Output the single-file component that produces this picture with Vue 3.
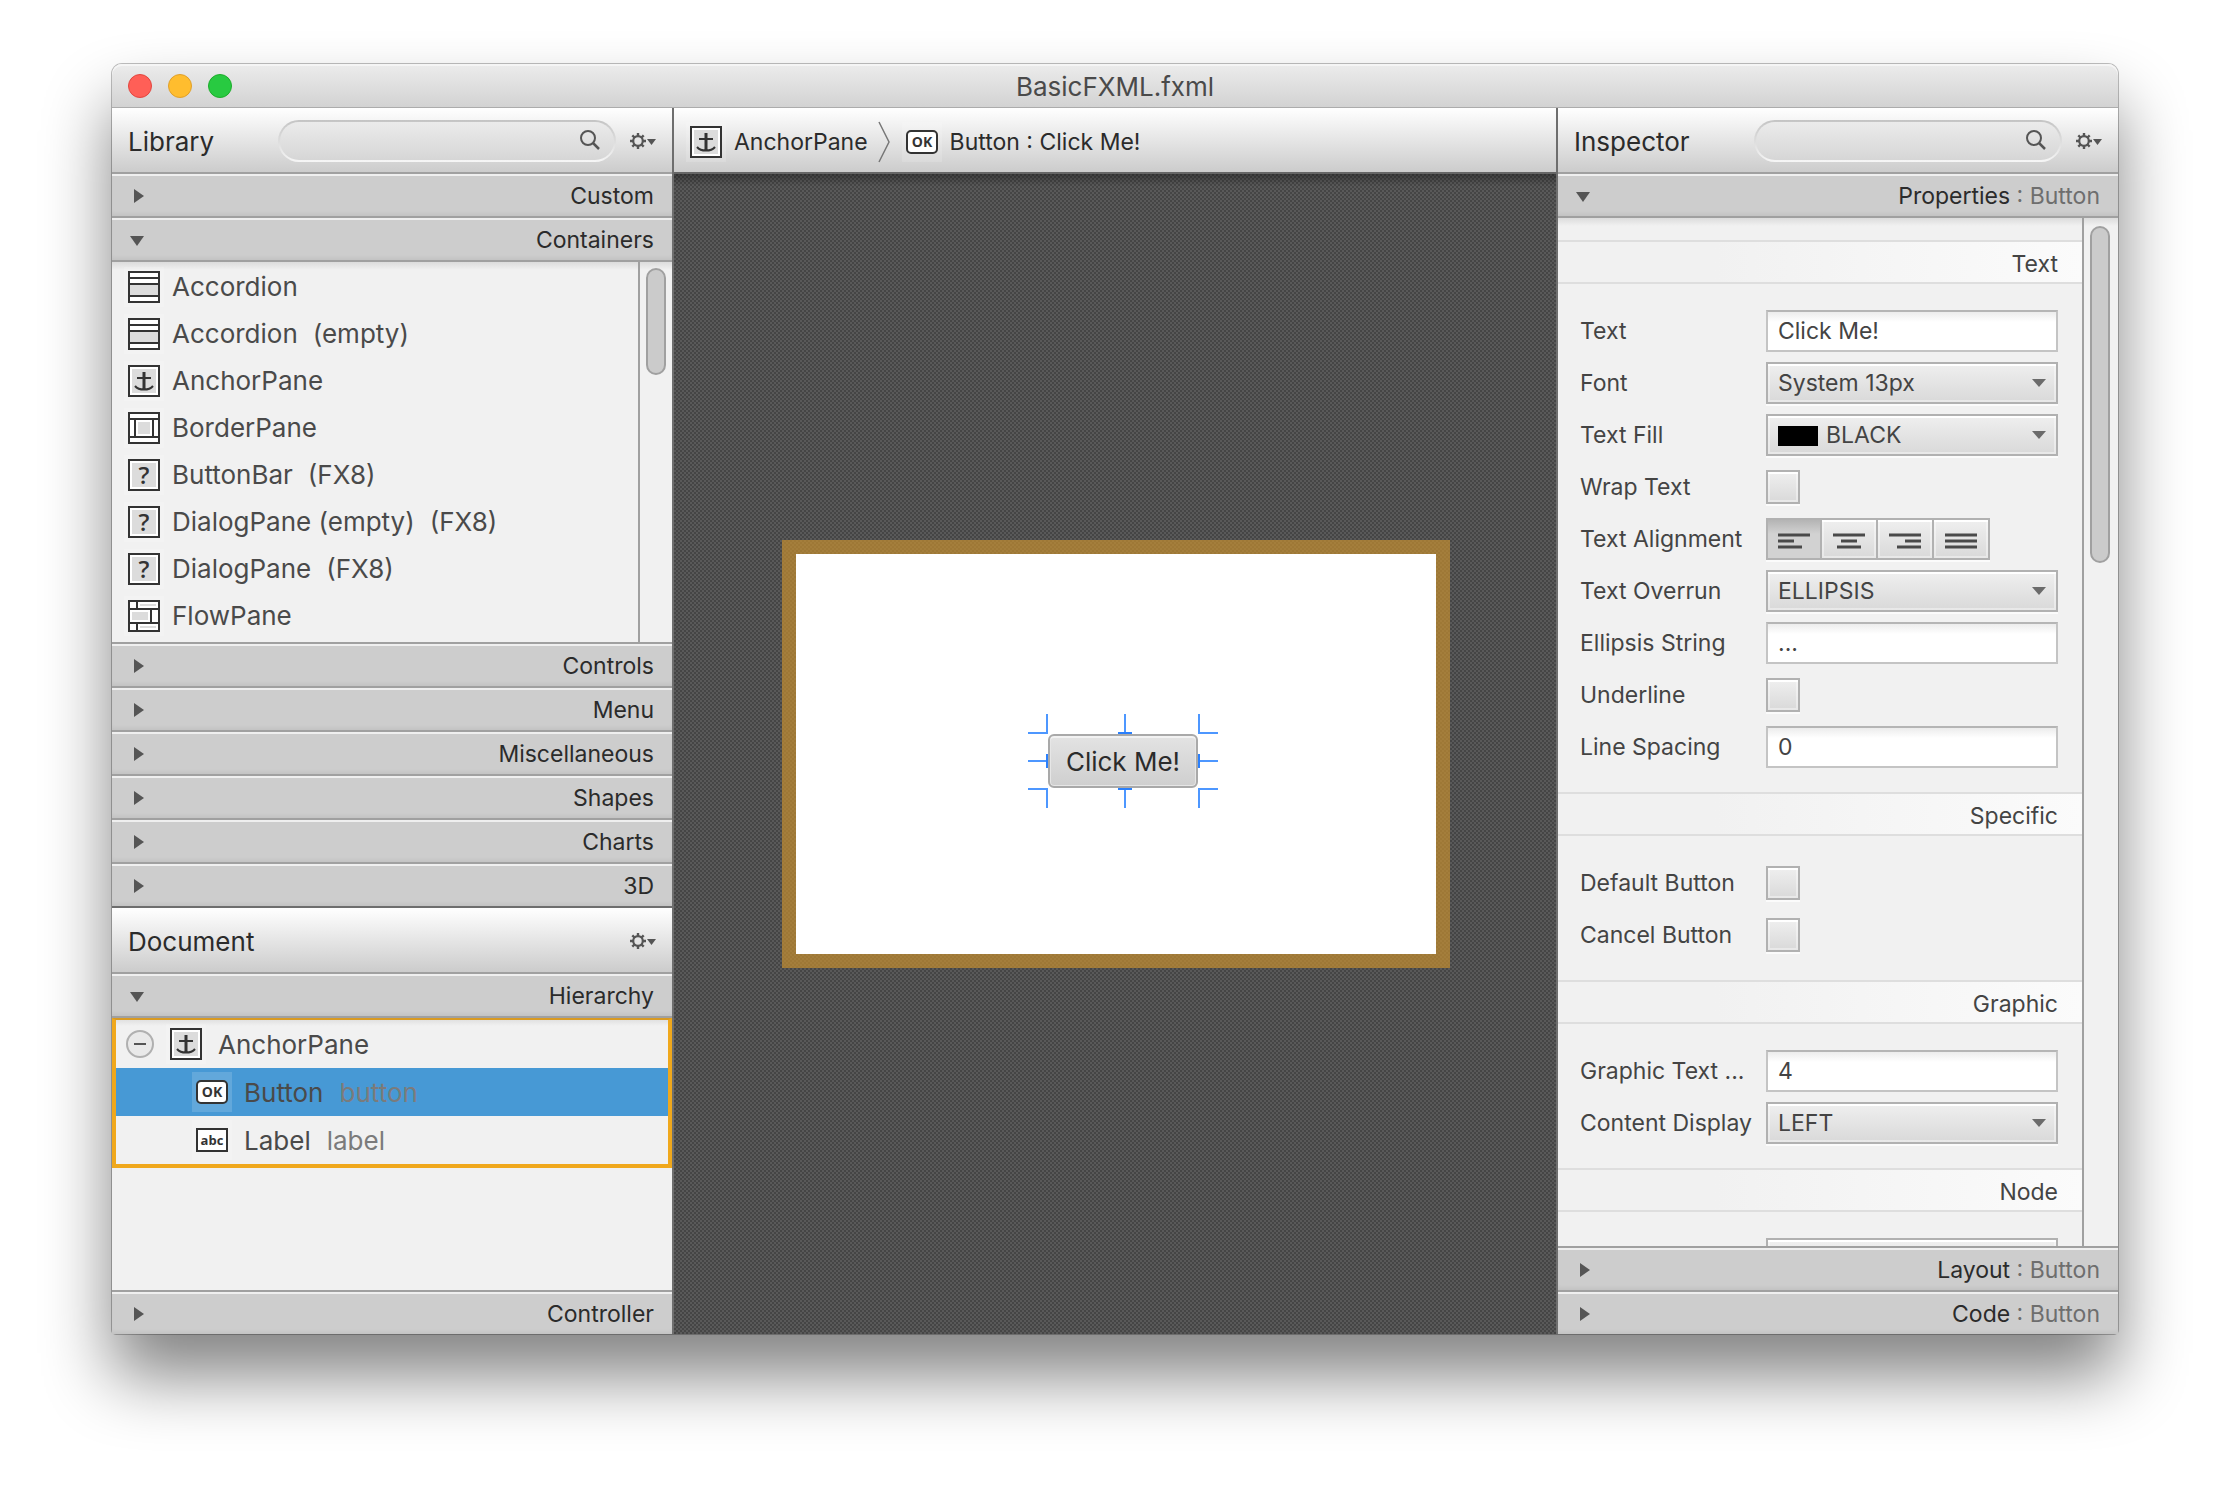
<template>
  <div class="desktop">
    <!-- iconos compartidos -->
    <svg class="sprite" aria-hidden="true">
      <symbol id="ic-search" viewBox="0 0 20 20">
        <circle cx="8" cy="8" r="7" fill="none" stroke="#555" stroke-width="2" />
        <path d="M13 13l6 6" stroke="#555" stroke-width="2.500" />
      </symbol>
      <symbol id="ic-gear" viewBox="0 0 26 16">
        <circle cx="8" cy="8" r="4.800" fill="none" stroke="#555" stroke-width="2.200" />
        <path
          d="M8 0v3M8 13v3M0 8h3M13 8h3M2.300 2.300l2.200 2.200M11.500 11.500l2.200 2.200M13.700 2.300l-2.200 2.200M4.500 11.500l-2.200 2.200"
          stroke="#555"
          stroke-width="2.400"
        />
        <path d="M17 6h9l-4.500 6z" fill="#555" />
      </symbol>
      <symbol id="ic-right" viewBox="0 0 14 16">
        <path d="M4 1l10 7l-10 7z" fill="#555" />
      </symbol>
      <symbol id="ic-down" viewBox="0 0 14 16">
        <path d="M0 4h14l-7 10z" fill="#555" />
      </symbol>
    </svg>

    <div class="window">
      <header class="titlebar">
        <div class="lights">
          <button class="light red" aria-label="Close"></button>
          <button class="light yellow" aria-label="Minimize"></button>
          <button class="light green" aria-label="Zoom"></button>
        </div>
        <span class="title">BasicFXML.fxml</span>
      </header>

      <div class="columns">
        <aside class="left">
          <section class="library">
            <div class="panel-head">
              <h2>Library</h2>
              <div class="search">
                <input v-model="librarySearch" type="text" aria-label="Library search" />
                <svg class="search-icon"><use href="#ic-search" /></svg>
              </div>
              <button class="gear" aria-label="Library menu"><svg><use href="#ic-gear" /></svg></button>
            </div>
            <button class="pane">
              <svg class="arrow"><use href="#ic-right" /></svg>
              <span>Custom</span>
            </button>
            <button class="pane">
              <svg class="arrow"><use href="#ic-down" /></svg>
              <span>Containers</span>
            </button>
            <div class="pane-body scroller">
              <ul class="list">
                <li v-for="item in containers" :key="item.name + item.note">
                  <FxIcon class="icon" :name="item.icon" />
                  <span>{{ item.name }}</span>
                  <span v-if="item.note" class="note">{{ item.note }}</span>
                </li>
              </ul>
              <div class="track"><div class="thumb thumb-short"></div></div>
            </div>
            <button v-for="name in libraryPanes" :key="name" class="pane">
              <svg class="arrow"><use href="#ic-right" /></svg>
              <span>{{ name }}</span>
            </button>
          </section>

          <section class="document">
            <div class="panel-head">
              <h2>Document</h2>
              <button class="gear" aria-label="Document menu"><svg><use href="#ic-gear" /></svg></button>
            </div>
            <button class="pane">
              <svg class="arrow"><use href="#ic-down" /></svg>
              <span>Hierarchy</span>
            </button>
            <div class="pane-body">
              <ul class="tree">
                <li>
                  <button class="collapse" aria-label="Collapse">
                    <svg viewBox="0 0 28 28">
                      <circle cx="14" cy="14" r="13" fill="#e9e9e9" stroke="#b0b0b0" stroke-width="2" />
                      <path d="M8 14h12" stroke="#555" stroke-width="2" />
                    </svg>
                  </button>
                  <FxIcon class="icon" name="anchor" />
                  <span>AnchorPane</span>
                </li>
                <li
                  v-for="node in children"
                  :key="node.id"
                  class="child"
                  :class="{ selected: node.id === selected }"
                  @click="selected = node.id"
                >
                  <FxIcon class="icon" :name="node.id" />
                  <span>{{ node.type }}</span>
                  <span class="info">{{ node.id }}</span>
                </li>
              </ul>
            </div>
            <button class="pane">
              <svg class="arrow"><use href="#ic-right" /></svg>
              <span>Controller</span>
            </button>
          </section>
        </aside>

        <main class="center">
          <nav class="breadcrumb">
            <FxIcon class="icon" name="anchor" />
            <a href="#">AnchorPane</a>
            <svg class="chevron" viewBox="0 0 12 42">
              <path d="M1 1l10 20l-10 20" fill="none" stroke="#777" stroke-width="1.500" />
            </svg>
            <FxIcon class="icon" name="button" />
            <a href="#">Button : Click Me!</a>
          </nav>
          <div class="canvas">
            <div class="frame">
              <div class="stage">
                <div class="node">
                  <button class="fx-button">Click Me!</button>
                  <svg class="handles" viewBox="0 0 190 94" fill="none" stroke-width="2">
                    <path
                      d="M0 19h19v-19M171 0v19h19M0 75h19v19M190 75h-19v19M0 47h19M171 47h19M97 0v19M97 75v19"
                      stroke="#4d97ff"
                    />
                    <path d="M90 19h14M90 75h14M19 40v14M171 40v14" stroke="#2b80fc" />
                  </svg>
                </div>
              </div>
            </div>
          </div>
        </main>

        <aside class="inspector">
          <div class="panel-head">
            <h2>Inspector</h2>
            <div class="search">
              <input v-model="inspectorSearch" type="text" aria-label="Inspector search" />
              <svg class="search-icon"><use href="#ic-search" /></svg>
            </div>
            <button class="gear" aria-label="Inspector menu"><svg><use href="#ic-gear" /></svg></button>
          </div>
          <button class="pane">
            <svg class="arrow"><use href="#ic-down" /></svg>
            <span>Properties <i>: Button</i></span>
          </button>
          <div class="pane-body scroller">
            <div class="props">
              <section v-for="group in groups" :key="group.title" class="group">
                <h3>{{ group.title }}</h3>
                <div class="rows">
                  <div v-for="row in group.rows" :key="row.id" class="row">
                    <label :for="row.id">{{ row.label }}</label>
                    <input v-if="row.kind === 'text'" :id="row.id" v-model="row.value" class="field" type="text" />
                    <input v-else-if="row.kind === 'check'" :id="row.id" v-model="row.value" class="check" type="checkbox" />
                    <div v-else-if="row.kind === 'align'" :id="row.id" class="align">
                      <button
                        v-for="(d, name) in alignments"
                        :key="name"
                        :class="{ active: row.value === name }"
                        :aria-label="name"
                        @click="row.value = name"
                      >
                        <svg viewBox="0 0 32 16"><path :d="d" stroke="#4a4a4a" stroke-width="3" /></svg>
                      </button>
                    </div>
                    <div v-else class="select">
                      <select :id="row.id" v-model="row.value" :class="{ 'with-swatch': row.swatch }">
                        <option :value="row.value">{{ row.value }}</option>
                      </select>
                      <span v-if="row.swatch" class="swatch"></span>
                      <svg class="select-arrow" viewBox="0 0 14 8"><path d="M0 0h14l-7 8z" fill="#6b6b6b" /></svg>
                    </div>
                  </div>
                </div>
              </section>
            </div>
            <div class="track"><div class="thumb thumb-long"></div></div>
          </div>
          <button class="pane">
            <svg class="arrow"><use href="#ic-right" /></svg>
            <span>Layout <i>: Button</i></span>
          </button>
          <button class="pane">
            <svg class="arrow"><use href="#ic-right" /></svg>
            <span>Code <i>: Button</i></span>
          </button>
        </aside>
      </div>
    </div>
  </div>
</template>

<script setup>
import { ref, h } from 'vue'

const librarySearch = ref('')
const inspectorSearch = ref('')
const selected = ref('button')

// lines: trazos oscuros, fill: zonas grises, text: rótulo del icono
const icons = {
  accordion: { lines: 'M1 7h30M1 13h30M1 25h30', fill: 'M2 14h28v10h-28z' },
  anchor: {
    fill: 'M4 4h24v24h-24z',
    lines: 'M15.500 7v17M16.500 7v17M9 13h14M7 21c2 2.400 5 3.600 9 3.600s7-1.200 9-3.600'
  },
  border: { lines: 'M1 7h30M1 25h30M7 7v18M25 7v18', fill: 'M10 10h12v12h-12z' },
  unknown: { fill: 'M4 4h24v24h-24z', text: '?', size: 24, weight: 600, y: 25 },
  flow: {
    lines: 'M1 9h30M1 23h30M9 1v8M23 9v14M9 23v8',
    fill: 'M12 4h16v2h-16zM4 12h16v8h-16zM12 26h16v2h-16z'
  },
  button: { text: 'OK', size: 14, weight: 700, y: 21, flat: true, radius: 4 },
  label: { text: 'abc', size: 13, weight: 700, y: 21, flat: true }
}

const FxIcon = (props) => {
  const icon = icons[props.name]
  return h('svg', { viewBox: '0 0 32 32' }, [
    h('rect', {
      x: 1,
      y: icon.flat ? 5 : 1,
      width: 30,
      height: icon.flat ? 22 : 30,
      rx: icon.radius || 0,
      fill: '#fff',
      stroke: '#333',
      'stroke-width': 2
    }),
    icon.fill && h('path', { d: icon.fill, fill: '#dcdcdc' }),
    icon.lines && h('path', { d: icon.lines, fill: 'none', stroke: '#333', 'stroke-width': 2 }),
    icon.text &&
      h(
        'text',
        {
          x: 16,
          y: icon.y,
          'text-anchor': 'middle',
          'font-family': 'Open Sans',
          'font-weight': icon.weight,
          'font-size': icon.size,
          fill: '#333'
        },
        icon.text
      )
  ])
}
FxIcon.props = ['name']

const containers = [
  { icon: 'accordion', name: 'Accordion', note: '' },
  { icon: 'accordion', name: 'Accordion', note: '(empty)' },
  { icon: 'anchor', name: 'AnchorPane', note: '' },
  { icon: 'border', name: 'BorderPane', note: '' },
  { icon: 'unknown', name: 'ButtonBar', note: '(FX8)' },
  { icon: 'unknown', name: 'DialogPane (empty)', note: '(FX8)' },
  { icon: 'unknown', name: 'DialogPane', note: '(FX8)' },
  { icon: 'flow', name: 'FlowPane', note: '' }
]

const libraryPanes = ['Controls', 'Menu', 'Miscellaneous', 'Shapes', 'Charts', '3D']

const children = [
  { id: 'button', type: 'Button' },
  { id: 'label', type: 'Label' }
]

const alignments = {
  left: 'M0 2h32M0 8h16M0 14h24',
  center: 'M0 2h32M8 8h16M4 14h24',
  right: 'M0 2h32M16 8h16M8 14h24',
  justify: 'M0 2h32M0 8h32M0 14h32'
}

const groups = ref([
  {
    title: 'Text',
    rows: [
      { id: 'text', label: 'Text', kind: 'text', value: 'Click Me!' },
      { id: 'font', label: 'Font', kind: 'select', value: 'System 13px' },
      { id: 'fill', label: 'Text Fill', kind: 'select', value: 'BLACK', swatch: true },
      { id: 'wrap', label: 'Wrap Text', kind: 'check', value: false },
      { id: 'alignment', label: 'Text Alignment', kind: 'align', value: 'left' },
      { id: 'overrun', label: 'Text Overrun', kind: 'select', value: 'ELLIPSIS' },
      { id: 'ellipsis', label: 'Ellipsis String', kind: 'text', value: '...' },
      { id: 'underline', label: 'Underline', kind: 'check', value: false },
      { id: 'spacing', label: 'Line Spacing', kind: 'text', value: '0' }
    ]
  },
  {
    title: 'Specific',
    rows: [
      { id: 'default', label: 'Default Button', kind: 'check', value: false },
      { id: 'cancel', label: 'Cancel Button', kind: 'check', value: false }
    ]
  },
  {
    title: 'Graphic',
    rows: [
      { id: 'gap', label: 'Graphic Text ...', kind: 'text', value: '4' },
      { id: 'display', label: 'Content Display', kind: 'select', value: 'LEFT' }
    ]
  },
  {
    title: 'Node',
    rows: [{ id: 'node', label: '', kind: 'select', value: '' }]
  }
])
</script>

<style>
body {
  margin: 0;
  background: #fff;
}
</style>

<style scoped>
* {
  box-sizing: border-box;
}

.desktop {
  height: 100vh;
  padding: 64px 112px 160px;
  font-family: Inter, "Liberation Sans", sans-serif;
  font-size: 23px;
  color: #444;
  overflow: hidden;
}

.sprite {
  position: absolute;
  width: 0;
  height: 0;
}

button,
input,
select {
  font: inherit;
  color: inherit;
  margin: 0;
}

h2,
h3,
ul {
  margin: 0;
  padding: 0;
  font-weight: 400;
  list-style: none;
}

.window {
  display: flex;
  flex-direction: column;
  height: 100%;
  border-radius: 10px 10px 4px 4px;
  box-shadow: 0 0 0 1px rgba(0, 0, 0, 0.25), 0 42px 68px rgba(0, 0, 0, 0.49);
}

.titlebar {
  display: grid;
  grid-template-columns: 1fr auto 1fr;
  align-items: center;
  flex: none;
  height: 44px;
  padding: 0 16px;
  border-radius: 10px 10px 0 0;
  background: linear-gradient(#ececec, #d2d2d2);
  box-shadow: inset 0 2px 0 #f5f5f5, inset 0 -1px 0 #acacac;
}

.title {
  font-size: 26px;
  color: #4a4a4a;
}

.lights {
  display: flex;
  gap: 16px;
}

.light {
  width: 24px;
  height: 24px;
  padding: 0;
  border: 1px solid;
  border-radius: 50%;
}

.red {
  background: #ff5f57;
  border-color: #e2463f;
}

.yellow {
  background: #ffbd2e;
  border-color: #e0a02a;
}

.green {
  background: #28ca41;
  border-color: #1dad2b;
}

.columns {
  display: flex;
  flex: 1;
  min-height: 0;
}

.left,
.inspector {
  display: flex;
  flex-direction: column;
  flex: none;
  width: 562px;
  background: #f1f1f1;
}

.left {
  border-right: 2px solid #6e6e6e;
  border-radius: 0 0 0 4px;
}

.inspector {
  border-left: 2px solid #6e6e6e;
  border-radius: 0 0 4px 0;
}

.library,
.document {
  display: flex;
  flex-direction: column;
  min-height: 0;
}

.library {
  flex: 1;
}

.document {
  flex: 0 0 426px;
}

.library .pane:last-child {
  border-bottom-color: #6e6e6e;
}

.document .pane:last-child,
.inspector .pane:last-child {
  height: 42px;
  border-bottom: none;
}

.panel-head {
  display: flex;
  align-items: center;
  flex: none;
  height: 66px;
  padding: 2px 16px 0;
  background: linear-gradient(#fff, #ccc);
  border-bottom: 2px solid #a0a0a0;
}

.panel-head h2 {
  flex: 1 0 150px;
  font-size: 26px;
  color: #2b2b2b;
}

.search {
  position: relative;
  flex: 0 1 338px;
  margin-right: 14px;
}

.inspector .search {
  flex-basis: 308px;
}

.search input {
  display: block;
  width: 100%;
  height: 42px;
  padding: 0 44px 0 16px;
  border: 2px solid transparent;
  border-radius: 21px;
  background: linear-gradient(#ebebeb, #d6d6d6) padding-box, linear-gradient(#c4c4c4, #f6f6f6) border-box;
  outline: none;
}

.search-icon {
  position: absolute;
  top: 10px;
  right: 16px;
  width: 20px;
  height: 20px;
}

.gear {
  width: 26px;
  height: 16px;
  padding: 0;
  border: none;
  background: none;
}

.gear svg {
  display: block;
  width: 26px;
  height: 16px;
}

.pane {
  display: flex;
  align-items: center;
  justify-content: space-between;
  flex: none;
  height: 44px;
  padding: 2px 18px 0;
  border: none;
  border-bottom: 2px solid #a0a0a0;
  background: #cdcdcd;
  box-shadow: inset 0 2px 0 #efefef, inset 0 -4px 4px -2px rgba(0, 0, 0, 0.06);
  color: #2b2b2b;
}

.pane i {
  font-style: normal;
  color: #6e6e6e;
}

.arrow {
  width: 14px;
  height: 16px;
}

.pane-body {
  flex: 1;
  min-height: 0;
  overflow: hidden;
  border-bottom: 2px solid #a0a0a0;
  background: linear-gradient(#dcdcdc, #f1f1f1 8px);
}

.scroller {
  display: flex;
}

.track {
  flex: none;
  width: 34px;
  padding: 6px;
  border-left: 2px solid #a0a0a0;
}

.inspector .track {
  width: 36px;
  padding: 8px 8px 0 6px;
}

.thumb {
  width: 20px;
  border: 2px solid #a0a0a0;
  border-radius: 10px;
  background: #cbcbcb;
}

.thumb-short {
  height: 29%;
}

.thumb-long {
  height: 33%;
}

.list {
  flex: 1;
  padding-top: 1px;
}

.list li {
  display: flex;
  align-items: center;
  height: 47px;
  padding-left: 16px;
  font-size: 26px;
  color: #4a4a4a;
}

.list .icon {
  margin-right: 12px;
}

.note {
  margin-left: 15px;
}

.icon {
  flex: none;
  width: 32px;
  height: 32px;
  background: rgba(255, 255, 255, 0.15);
  box-shadow: 0 0 0 4px rgba(255, 255, 255, 0.15);
}

.tree {
  border: 4px solid #f0a81c;
  border-top: 2px solid #d99a22;
}

.tree li {
  display: flex;
  align-items: center;
  gap: 16px;
  height: 48px;
  padding-left: 10px;
  font-size: 26px;
  color: #4a4a4a;
}

.tree .child {
  padding-left: 80px;
}

.tree .selected {
  background: #4799d5;
}

.tree .info {
  color: #7b7b7b;
}

.collapse {
  width: 28px;
  height: 28px;
  padding: 0;
  border: none;
  background: none;
}

.collapse svg {
  display: block;
}

.center {
  display: flex;
  flex-direction: column;
  flex: 1;
  min-width: 0;
}

.breadcrumb {
  display: flex;
  align-items: center;
  gap: 12px;
  flex: none;
  height: 66px;
  padding: 4px 16px 0;
  background: linear-gradient(#fff, #ccc);
  border-bottom: 2px solid #666;
}

.breadcrumb a {
  color: #2b2b2b;
  text-decoration: none;
}

.chevron {
  width: 12px;
  height: 42px;
  margin: 0 4px 0 -2px;
}

.canvas {
  display: flex;
  align-items: center;
  justify-content: center;
  flex: 1;
  min-height: 0;
  padding-left: 2px;
  background: linear-gradient(rgba(0, 0, 0, 0.3), transparent 12px),
    repeating-conic-gradient(#454545 0 25%, #595959 0 50%) 0 0 / 4px 4px;
}

.frame {
  padding: 14px;
  background: rgba(196, 143, 48, 0.7);
}

.stage {
  position: relative;
  width: 640px;
  height: 400px;
  background: #fff;
}

.node {
  position: absolute;
  left: 252px;
  top: 180px;
}

.fx-button {
  display: block;
  width: 150px;
  height: 54px;
  padding: 0;
  border: 2px solid #a9a9a9;
  border-radius: 6px;
  background: linear-gradient(#e3e3e3, #cfcfcf);
  box-shadow: inset 0 2px 0 #f2f2f2, inset 0 0 0 1px #e6e6e6;
  font-size: 26px;
  color: #2b2b2b;
}

.handles {
  position: absolute;
  left: -20px;
  top: -20px;
  width: 190px;
  height: 94px;
  pointer-events: none;
}

.props {
  flex: 1;
  padding-top: 22px;
}

.group h3 {
  height: 44px;
  padding-right: 24px;
  border-top: 2px solid #dedede;
  border-bottom: 2px solid #dedede;
  background: linear-gradient(90deg, #f1f1f1 30%, #fbfbfb);
  font-size: 23px;
  line-height: 44px;
  text-align: right;
}

.rows {
  display: flex;
  flex-direction: column;
  gap: 10px;
  padding: 26px 24px 24px 22px;
}

.row {
  display: grid;
  grid-template-columns: 186px 1fr;
  align-items: center;
  height: 42px;
}

.row label {
  white-space: nowrap;
}

.field {
  width: 100%;
  height: 42px;
  padding: 0 10px;
  border: 2px solid #c4c4c4;
  border-top-color: #b5b5b5;
  background: linear-gradient(#ececec, #fff 10px);
  outline: none;
}

.check,
.select select {
  appearance: none;
  border: 2px solid #b1b1b1;
  border-radius: 0;
  background: linear-gradient(#efefef, #d9d9d9);
  box-shadow: inset 0 2px 0 #fff, inset 0 0 0 2px rgba(255, 255, 255, 0.4), 0 2px 0 #fbfbfb;
}

.check {
  width: 34px;
  height: 34px;
}

.check:checked {
  background: #777;
}

.select {
  position: relative;
}

.select select {
  display: block;
  width: 100%;
  height: 42px;
  padding: 0 36px 0 10px;
}

.select .with-swatch {
  padding-left: 58px;
}

.swatch {
  position: absolute;
  left: 12px;
  top: 12px;
  width: 40px;
  height: 20px;
  background: #000;
}

.select-arrow {
  position: absolute;
  right: 12px;
  top: 17px;
  width: 14px;
  height: 8px;
  pointer-events: none;
}

.align {
  display: flex;
  justify-self: start;
  border: 2px solid #b1b1b1;
  box-shadow: 0 2px 0 #fbfbfb;
}

.align button {
  width: 56px;
  height: 38px;
  padding: 0 10px;
  border: none;
  border-right: 2px solid #b1b1b1;
  background: linear-gradient(#efefef, #d9d9d9);
  box-shadow: inset 0 2px 0 #fff, inset 0 0 0 2px rgba(255, 255, 255, 0.4);
}

.align button:first-child,
.align button:last-child {
  width: 54px;
}

.align button:last-child {
  border-right: none;
}

.align .active {
  background: linear-gradient(#b4b4b4, #d2d2d2 14px);
  box-shadow: none;
}

.align svg {
  display: block;
  width: 32px;
  height: 16px;
  margin: 4px auto 0;
}
</style>
